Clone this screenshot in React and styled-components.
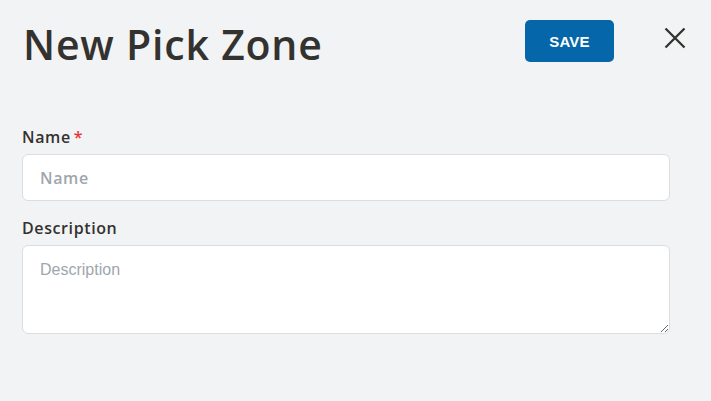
import styled, { createGlobalStyle } from 'styled-components'

const GlobalStyle = createGlobalStyle`
  body {
    margin: 0;
    background: #f2f3f5;
    font-family: 'Open Sans', 'Liberation Sans', sans-serif;
  }
`

const Page = styled.div`
  width: 711px;
  height: 401px;
  box-sizing: border-box;
  padding: 20px 41px 0 22px;
  background: #f2f3f5;
`

const Header = styled.div`
  display: flex;
  align-items: flex-start;
  justify-content: space-between;
  margin-right: -16px;
`

const Title = styled.h1`
  margin: 0;
  padding: 0 0 0 1px;
  font-family: 'Open Sans', sans-serif;
  font-size: 41px;
  line-height: 48px;
  font-weight: 600;
  letter-spacing: 0.8px;
  color: #33322f;
`

const Actions = styled.div`
  display: flex;
  align-items: flex-start;
  gap: 50px;
`

const SaveBtn = styled.button`
  width: 89px;
  height: 42px;
  border: none;
  border-radius: 5px;
  background: #0566aa;
  color: #fff;
  font-family: 'Liberation Sans', sans-serif;
  font-weight: 700;
  font-size: 15px;
  letter-spacing: 0.2px;
  cursor: pointer;
`

const CloseBtn = styled.button`
  display: flex;
  margin-top: 7px;
  padding: 0;
  border: none;
  background: transparent;
  cursor: pointer;
`

const Form = styled.form`
  display: flex;
  flex-direction: column;
  margin-top: 60px;
`

const Label = styled.label`
  font-size: 16px;
  font-weight: 600;
  letter-spacing: 0.6px;
  color: #33322f;
  line-height: 18px;
  margin-bottom: 8px;
`

const Required = styled.span`
  color: #e5373a;
  margin-left: 3px;
`

const Input = styled.input`
  height: 47px;
  box-sizing: border-box;
  border: 1px solid #dcdde0;
  border-radius: 6px;
  background: #fff;
  padding: 0 17px;
  font-family: 'Open Sans', sans-serif;
  font-size: 16px;
  font-weight: 600;
  letter-spacing: 0.6px;
  margin-bottom: 18px;
  outline: none;
  &::placeholder {
    color: #9ea6ae;
  }
`

const TextArea = styled.textarea`
  height: 89px;
  box-sizing: border-box;
  border: 1px solid #dcdde0;
  border-radius: 6px;
  background: #fff;
  padding: 15px 17px;
  font-family: 'Liberation Sans', sans-serif;
  font-size: 16px;
  outline: none;
  &::placeholder {
    color: #9ea6ae;
  }
`

const App = () => {
  return (
    <Page>
      <GlobalStyle />
      <Header>
        <Title>New Pick Zone</Title>
        <Actions>
          <SaveBtn type='button'>SAVE</SaveBtn>
          <CloseBtn type='button' aria-label='Close'>
            <svg width='22' height='22' viewBox='0 0 22 22'>
              <path d='M1.5 1.5 L20.5 20.5 M20.5 1.5 L1.5 20.5' stroke='#33322f' strokeWidth='2.3' />
            </svg>
          </CloseBtn>
        </Actions>
      </Header>

      <Form>
        <Label>
          Name<Required>*</Required>
        </Label>
        <Input placeholder='Name' />
        <Label>Description</Label>
        <TextArea placeholder='Description' />
      </Form>
    </Page>
  )
}

export default App
